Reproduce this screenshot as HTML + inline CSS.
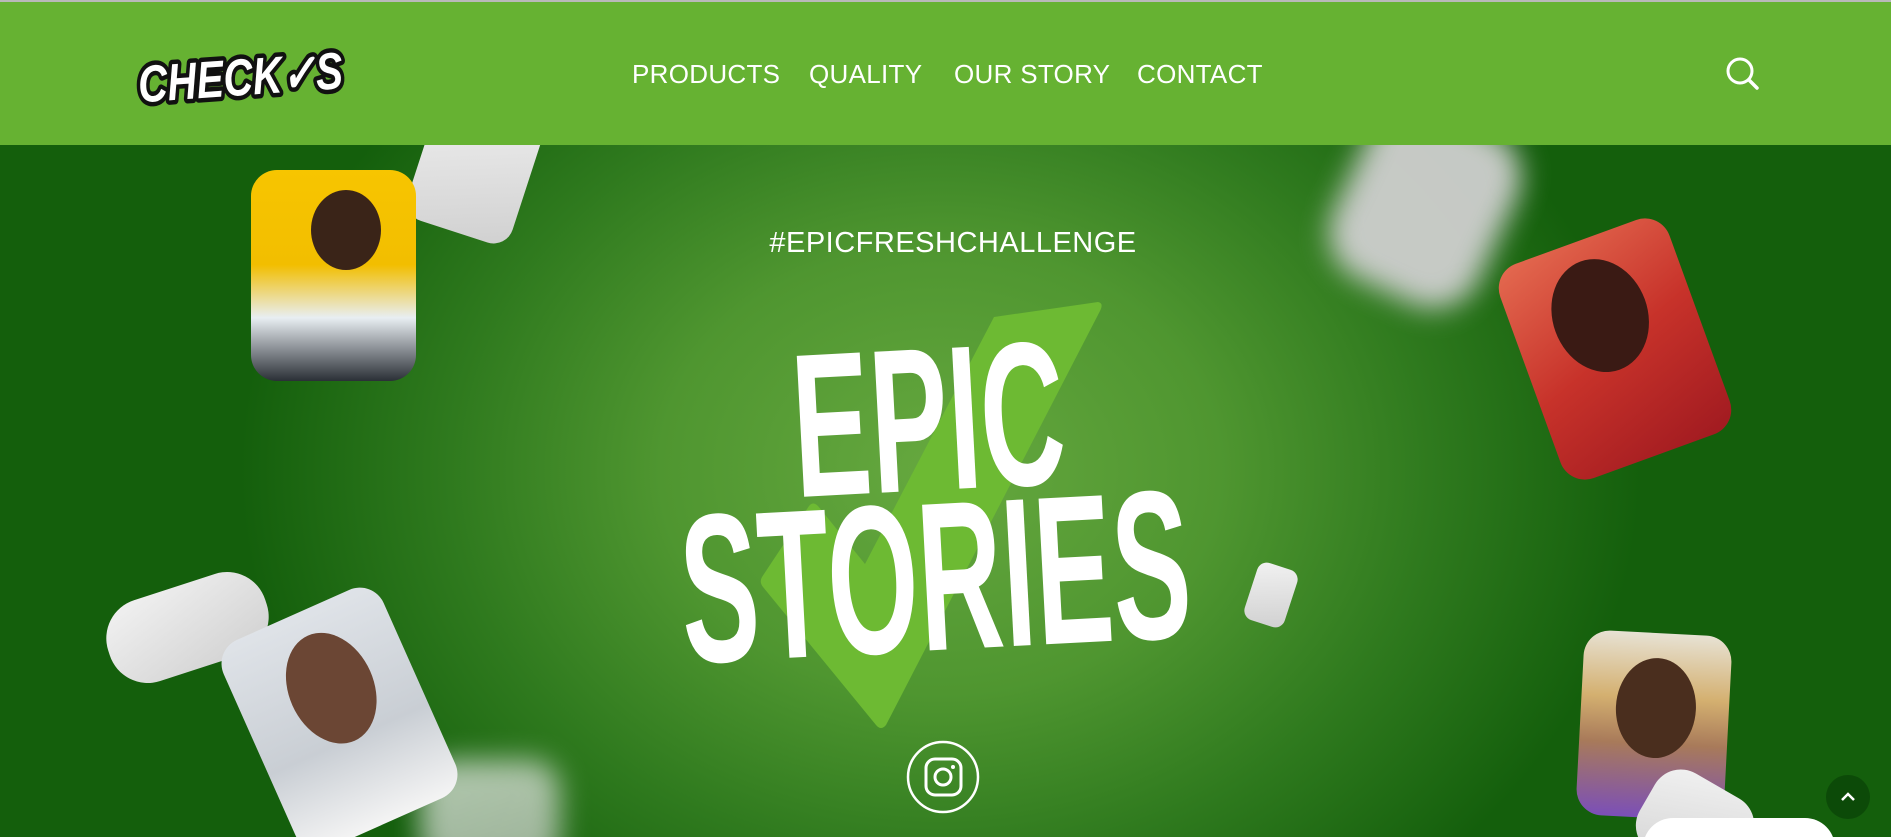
<!DOCTYPE html>
<html><head><meta charset="utf-8"><style>
*{margin:0;padding:0;box-sizing:border-box}
html,body{width:1891px;height:837px;overflow:hidden}
#w{position:relative;width:1891px;height:837px;overflow:hidden;font-family:"Liberation Sans",sans-serif;background:radial-gradient(ellipse 700px 560px at 940px 470px,#66a83f 0%,#4f9630 40%,#2f7a1e 70%,#145f0c 100%)}
.hdr{position:absolute;left:0;top:0;width:1891px;height:145px;background:#66b232;border-top:2px solid #b9b9b9;z-index:5}
.nav{position:absolute;top:57px;font-size:26px;color:#fff;letter-spacing:0.3px}
.ph{position:absolute;border-radius:26px;overflow:hidden}
.gum{position:absolute;background:linear-gradient(160deg,#f2f2f2,#d0d0d0);border-radius:30px}
</style></head><body><div id="w">
<div class="hdr">
<svg style="position:absolute;left:130px;top:38px" width="230" height="70"><text x="8" y="56" font-family="Liberation Sans" font-weight="900" font-size="52" font-style="italic" fill="#fff" stroke="#111" stroke-width="9" paint-order="stroke" stroke-linejoin="round" transform="rotate(-4 100 40)" textLength="205" lengthAdjust="spacingAndGlyphs">CHECK✓S</text></svg>
<div class="nav" style="left:632px">PRODUCTS</div>
<div class="nav" style="left:809px">QUALITY</div>
<div class="nav" style="left:954px">OUR STORY</div>
<div class="nav" style="left:1137px">CONTACT</div>
<svg style="position:absolute;left:1720px;top:50px" width="45" height="45"><circle cx="20" cy="19" r="12" fill="none" stroke="#fff" stroke-width="3"/><path d="M29 28 L37 36" stroke="#fff" stroke-width="3.5" stroke-linecap="round"/></svg>
</div>
<div class="gum" style="left:420px;top:100px;width:110px;height:135px;transform:rotate(18deg);border-radius:20px"></div>
<div class="gum" style="left:1345px;top:110px;width:160px;height:190px;filter:blur(14px);opacity:.95;transform:rotate(25deg);border-radius:50px;background:#cfcfcf"></div>
<div class="gum" style="left:1250px;top:565px;width:42px;height:60px;transform:rotate(18deg);border-radius:10px"></div>
<div class="gum" style="left:105px;top:585px;width:165px;height:85px;transform:rotate(-18deg);border-radius:40px"></div>
<div class="gum" style="left:420px;top:760px;width:140px;height:110px;filter:blur(14px);opacity:.7"></div>
<div class="ph" style="left:251px;top:170px;width:165px;height:211px;background:linear-gradient(180deg,#f7c500 0%,#f2be00 45%,#e8eef2 70%,#2a2f36 100%)"><div style="position:absolute;left:60px;top:20px;width:70px;height:80px;border-radius:50%;background:#3a2418"></div></div>
<div class="ph" style="left:1525px;top:235px;width:180px;height:228px;transform:rotate(-20deg);background:linear-gradient(160deg,#e46a50,#c7322a 50%,#a01a20)"><div style="position:absolute;left:40px;top:20px;width:95px;height:115px;border-radius:50%;background:#3a1a14"></div></div>
<div class="ph" style="left:252px;top:605px;width:175px;height:228px;transform:rotate(-24deg);background:linear-gradient(180deg,#dfe3e8,#c9ced4 60%,#f4f4f4)"><div style="position:absolute;left:50px;top:25px;width:85px;height:115px;border-radius:50%;background:#6b4634"></div></div>
<div class="ph" style="left:1580px;top:633px;width:148px;height:185px;transform:rotate(3deg);background:linear-gradient(180deg,#e7e2d4,#d4b070 35%,#a87a5a 60%,#7b4fb8 100%)"><div style="position:absolute;left:35px;top:25px;width:80px;height:100px;border-radius:50%;background:#4a2e1e"></div></div>
<div class="gum" style="left:1640px;top:780px;width:110px;height:90px;transform:rotate(30deg)"></div>
<div style="position:absolute;left:1643px;top:818px;width:192px;height:60px;background:#fff;border-radius:40px"></div>
<div style="position:absolute;left:1826px;top:775px;width:44px;height:44px;border-radius:50%;background:#0c4a08"><svg width="44" height="44"><path d="M16 25 L22 19 L28 25" fill="none" stroke="#fff" stroke-width="2.5"/></svg></div>
<div style="position:absolute;left:0;width:1906px;top:227px;text-align:center;font-size:29px;color:#fff;letter-spacing:0.5px">#EPICFRESHCHALLENGE</div>
<svg style="position:absolute;left:0;top:0" width="1891" height="837">
<path d="M994 317 L1098 302 Q1104 303 1100 311 L886 725 Q881 731 876 725 L763 587 Q759 582 762 577 L809 506 Q813 501 818 506 L865 564 Z" fill="#6dba33"/>
<g fill="#fff" font-family="'Liberation Sans Narrow','Liberation Sans',sans-serif" font-weight="bold">
<text x="792" y="490" font-size="205" textLength="272" lengthAdjust="spacingAndGlyphs" transform="rotate(-3 930 410)">EPIC</text>
<text x="680" y="650" font-size="212" textLength="510" lengthAdjust="spacingAndGlyphs" transform="rotate(-3 935 570)">STORIES</text>
</g>
<circle cx="943" cy="777" r="35" fill="none" stroke="#fff" stroke-width="2.5"/>
<rect x="926" y="759" width="35" height="36" rx="9" fill="none" stroke="#fff" stroke-width="3"/>
<circle cx="943" cy="777" r="8" fill="none" stroke="#fff" stroke-width="3"/>
<circle cx="953" cy="767" r="2" fill="#fff"/>
</svg>
</div></body></html>
